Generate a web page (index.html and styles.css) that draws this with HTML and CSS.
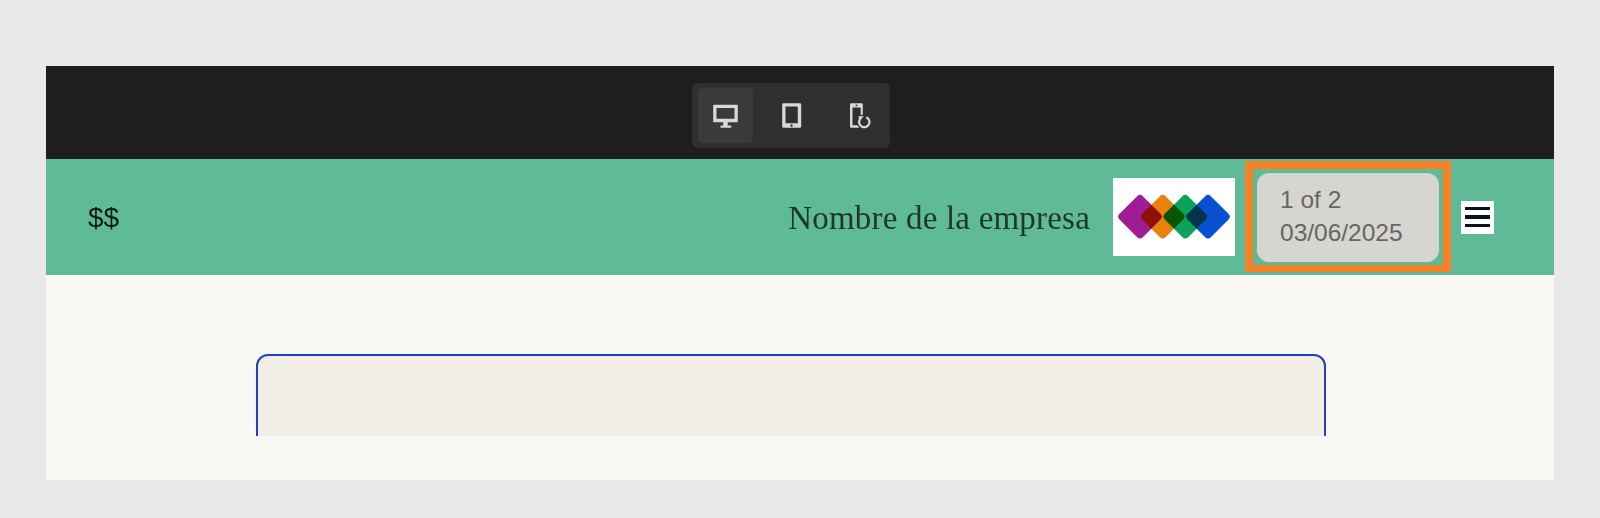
FILE: index.html
```html
<!DOCTYPE html>
<html lang="es">
<head>
    <meta charset="UTF-8">
    <title>Vista previa</title>
    <link rel="stylesheet" href="styles.css">
</head>
<body>

    <div class="preview">

      <!-- Device switcher -->
      <div class="device-bar">
        <div class="device-group">
          <button class="device-btn active" aria-label="Desktop">
            <svg class="icon" viewBox="0 0 26 26"><path d="M1 1.800h23a.8.8 0 0 1 .8.8v15.800a.8.8 0 0 1-.8.8h-9.200v3.300h3.400v2.300H7.500v-2.300h2.700v-3.300H1a.8.8 0 0 1-.8-.8V2.600a.8.8 0 0 1 .8-.8zM3.500 5v10.800h18V5z" fill-rule="evenodd"/></svg>
          </button>
          <button class="device-btn" aria-label="Tablet">
            <svg class="icon" viewBox="0 0 26 26"><path d="M5.500.2h16.400a1.300 1.300 0 0 1 1.300 1.300v22a1.300 1.300 0 0 1-1.300 1.300H5.500a1.300 1.300 0 0 1-1.300-1.300v-22A1.300 1.300 0 0 1 5.500.2zm2 3.300v16.700h12.300V3.500zm6 17.800a1.200 1.200 0 1 0 0 2.400 1.200 1.200 0 0 0 0-2.400z" fill-rule="evenodd"/></svg>
          </button>
          <button class="device-btn" aria-label="Rotate phone">
            <svg class="icon" viewBox="0 0 26 26">
              <path d="M8 .2h10.800a1 1 0 0 1 1 1v23.600H8a1 1 0 0 1-1-1V1.200a1 1 0 0 1 1-1zM9.500 4.500v17.800h8.200V4.500zm4-3a.9.9 0 1 0 0 1.800.9.9 0 0 0 0-1.800z" fill-rule="evenodd"/>
              <circle class="icon-halo" cx="21.300" cy="19" r="7.600"/>
              <path class="icon-line" d="M23.300 14.200A5.200 5.200 0 1 1 16.600 16.700"/>
              <path d="M15.500 13.200h5.300l-4.600 5.200z"/>
            </svg>
          </button>
        </div>
      </div>

      <!-- Header -->
      <header class="site-header">
        <span class="price">$$</span>
        <span class="company">Nombre de la empresa</span>
        <div class="logo">
          <svg class="logo-art" viewBox="0 0 122 78">
            <rect class="d-purple" x="10.500" y="22.200" width="33" height="33" rx="4" transform="rotate(45 27 38.700)"/>
            <rect class="d-orange" x="33.200" y="22.200" width="33" height="33" rx="4" transform="rotate(45 49.700 38.700)"/>
            <rect class="d-green" x="55.800" y="22.200" width="33" height="33" rx="4" transform="rotate(45 72.300 38.700)"/>
            <rect class="d-blue" x="78.500" y="22.200" width="33" height="33" rx="4" transform="rotate(45 95 38.700)"/>
          </svg>
        </div>
        <div class="page-outline">
          <div class="page-info">
            <div>1 of 2</div>
            <div>03/06/2025</div>
          </div>
        </div>
        <button class="menu-btn" aria-label="Menu">
          <span></span><span></span><span></span>
        </button>
      </header>

      <!-- Page body, cut off by the preview -->
      <main class="page-body">
        <div class="panel"></div>
      </main>

    </div>

</body>
</html>
```

FILE: styles.css
```css
/* Global */
body {
    margin: 0;
    padding: 66px 46px 38px;
    background-color: #e9e9e9;
    font-family: "Liberation Sans", Arial, sans-serif;
}

.preview { background: #f8f7f3; padding-bottom: 44px; }

/* Device switcher */
.device-bar {
    height: 93px;
    background: #1e1e1e;
    display: flex;
    justify-content: center;
    padding: 17px 18px 0 0;
    box-sizing: border-box;
}
.device-group {
    height: 65px;
    width: 198px;
    box-sizing: border-box;
    padding: 5px 6px;
    display: flex;
    gap: 10px;
    background: #303030;
    border-radius: 6px;
}
.device-btn {
    width: 55px;
    height: 55px;
    padding: 0;
    border: none;
    border-radius: 5px;
    background: transparent;
    display: flex;
    align-items: center;
    justify-content: center;
}
.device-btn.active { background: #3a3a3a; }
.icon { width: 26px; height: 26px; fill: #d8d8d8; overflow: visible; }
.icon-line { fill: none; stroke: #d8d8d8; stroke-width: 2.200; }
.icon-halo { fill: #303030; }

/* Header */
.site-header {
    height: 116px;
    background: #5fbb97;
    display: flex;
    align-items: center;
    padding: 0 60px 0 42px;
}
.price { font-size: 28px; color: #0b1a16; padding-top: 2px; }
.company {
    margin-left: auto;
    padding-top: 2px;
    font-family: "Liberation Serif", Georgia, serif;
    font-size: 33px;
    letter-spacing: 0.2px;
    color: #20352e;
}
.logo {
    width: 122px;
    height: 78px;
    margin-left: 23px;
    background: #fff;
}
.logo-art { display: block; width: 122px; height: 78px; }
.logo-art rect { mix-blend-mode: multiply; }
.d-purple { fill: #a01c96; }
.d-orange { fill: #e8820c; }
.d-green { fill: #0aa35a; }
.d-blue { fill: #0a50d2; }

.page-outline {
    width: 206px;
    height: 111px;
    margin: 0 0 1px 10px;
    box-sizing: border-box;
    border: 8px solid #f58025;
    border-bottom-width: 7px;
    padding: 4px 4px 3px;
}
.page-info {
    height: 100%;
    box-sizing: border-box;
    padding: 10px 0 0 23px;
    background: #d6d5d0;
    border-radius: 12px;
    font-size: 24.500px;
    line-height: 33px;
    color: #666;
}
.menu-btn {
    width: 33px;
    height: 33px;
    margin-left: 10px;
    padding: 0 4px;
    border: none;
    background: #fff;
    display: flex;
    flex-direction: column;
    justify-content: center;
    gap: 5px;
}
.menu-btn span { display: block; height: 3.500px; width: 100%; background: #0b1020; }

/* Page body */
.page-body {
    height: 161px;
    overflow: hidden;
    padding: 79px 228px 0 210px;
    box-sizing: border-box;
}
.panel {
    height: 300px;
    background: #f0eee5;
    border: 2px solid #1f3fcc;
    border-radius: 12px;
}
```
